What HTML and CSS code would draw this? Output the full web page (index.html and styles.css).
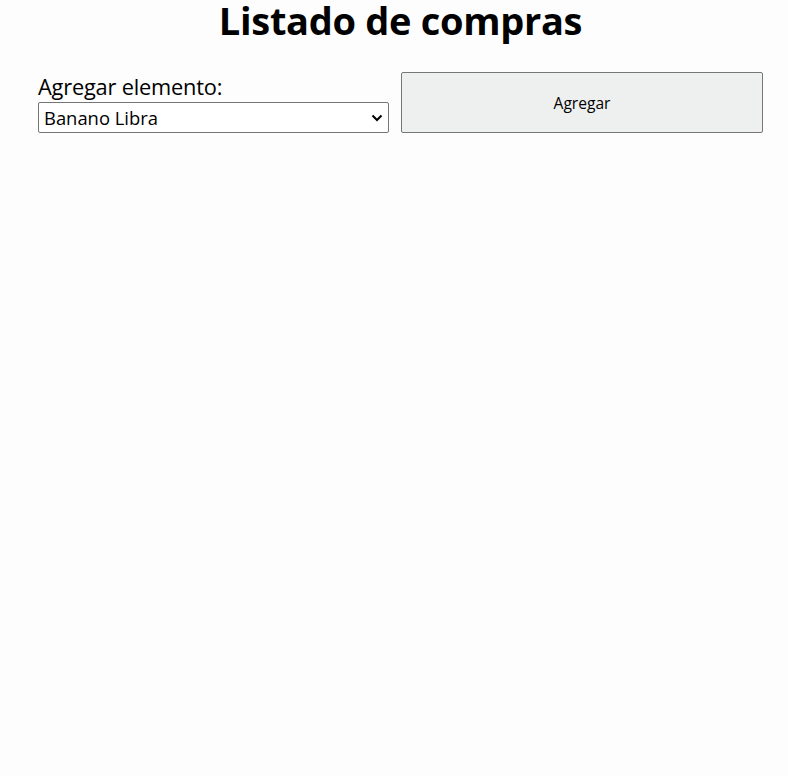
FILE: index.html
```html
<!DOCTYPE html>
<html lang="es">
<head>
<meta charset="utf-8">
<title>Listado de compras</title>
<link rel="stylesheet" href="styles.css">
</head>
<body>
<main class="app">
  <h1 class="title">Listado de compras</h1>
  <form class="add-form">
    <div class="field">
      <label class="field-label" for="item">Agregar elemento:</label>
      <div class="select-wrap">
        <select id="item" class="select">
          <option>Banano Libra</option>
        </select>
        <svg class="chev" width="12" height="8" viewBox="0 0 12 8"><path d="M1.5 1.5 L6 6 L10.5 1.5" fill="none" stroke="#000" stroke-width="2"/></svg>
      </div>
    </div>
    <button type="button" class="btn">Agregar</button>
  </form>
</main>
</body>
</html>
```
FILE: styles.css
```css
html, body {
  margin: 0;
  padding: 0;
  background: #fdfdfd;
}
body {
  font-family: "Open Sans", "Noto Sans", sans-serif;
  color: #000;
}
.app {
  padding: 0 25px 0 38px;
}
.title {
  margin: 0;
  padding-top: 0;
  text-align: center;
  font-size: 38px;
  font-weight: 700;
  line-height: 40px;
  letter-spacing: -0.3px;
}
.add-form {
  display: grid;
  grid-template-columns: 351px 362px;
  column-gap: 12px;
  margin-top: 32px;
  align-items: stretch;
}
.field {
  display: flex;
  flex-direction: column;
}
.field-label {
  font-size: 21.8px;
  line-height: 30px;
  letter-spacing: -0.2px;
}
.select-wrap {
  position: relative;
  height: 31px;
}
.select {
  appearance: none;
  -webkit-appearance: none;
  width: 100%;
  height: 31px;
  box-sizing: border-box;
  margin: 0;
  border: 1px solid #767676;
  border-radius: 2px;
  background: #fff;
  font-family: "Open Sans", "Noto Sans", sans-serif;
  font-size: 18.4px;
  padding: 0 0 0 5px;
  color: #000;
}
.chev {
  position: absolute;
  right: 6px;
  top: 12px;
  pointer-events: none;
}
.btn {
  box-sizing: border-box;
  height: 61px;
  margin: 0;
  border: 1px solid #767676;
  border-radius: 2px;
  background: #eef0f0;
  font-family: "Open Sans", "Noto Sans", sans-serif;
  font-size: 15.6px;
  color: #000;
  padding: 0;
}
```
